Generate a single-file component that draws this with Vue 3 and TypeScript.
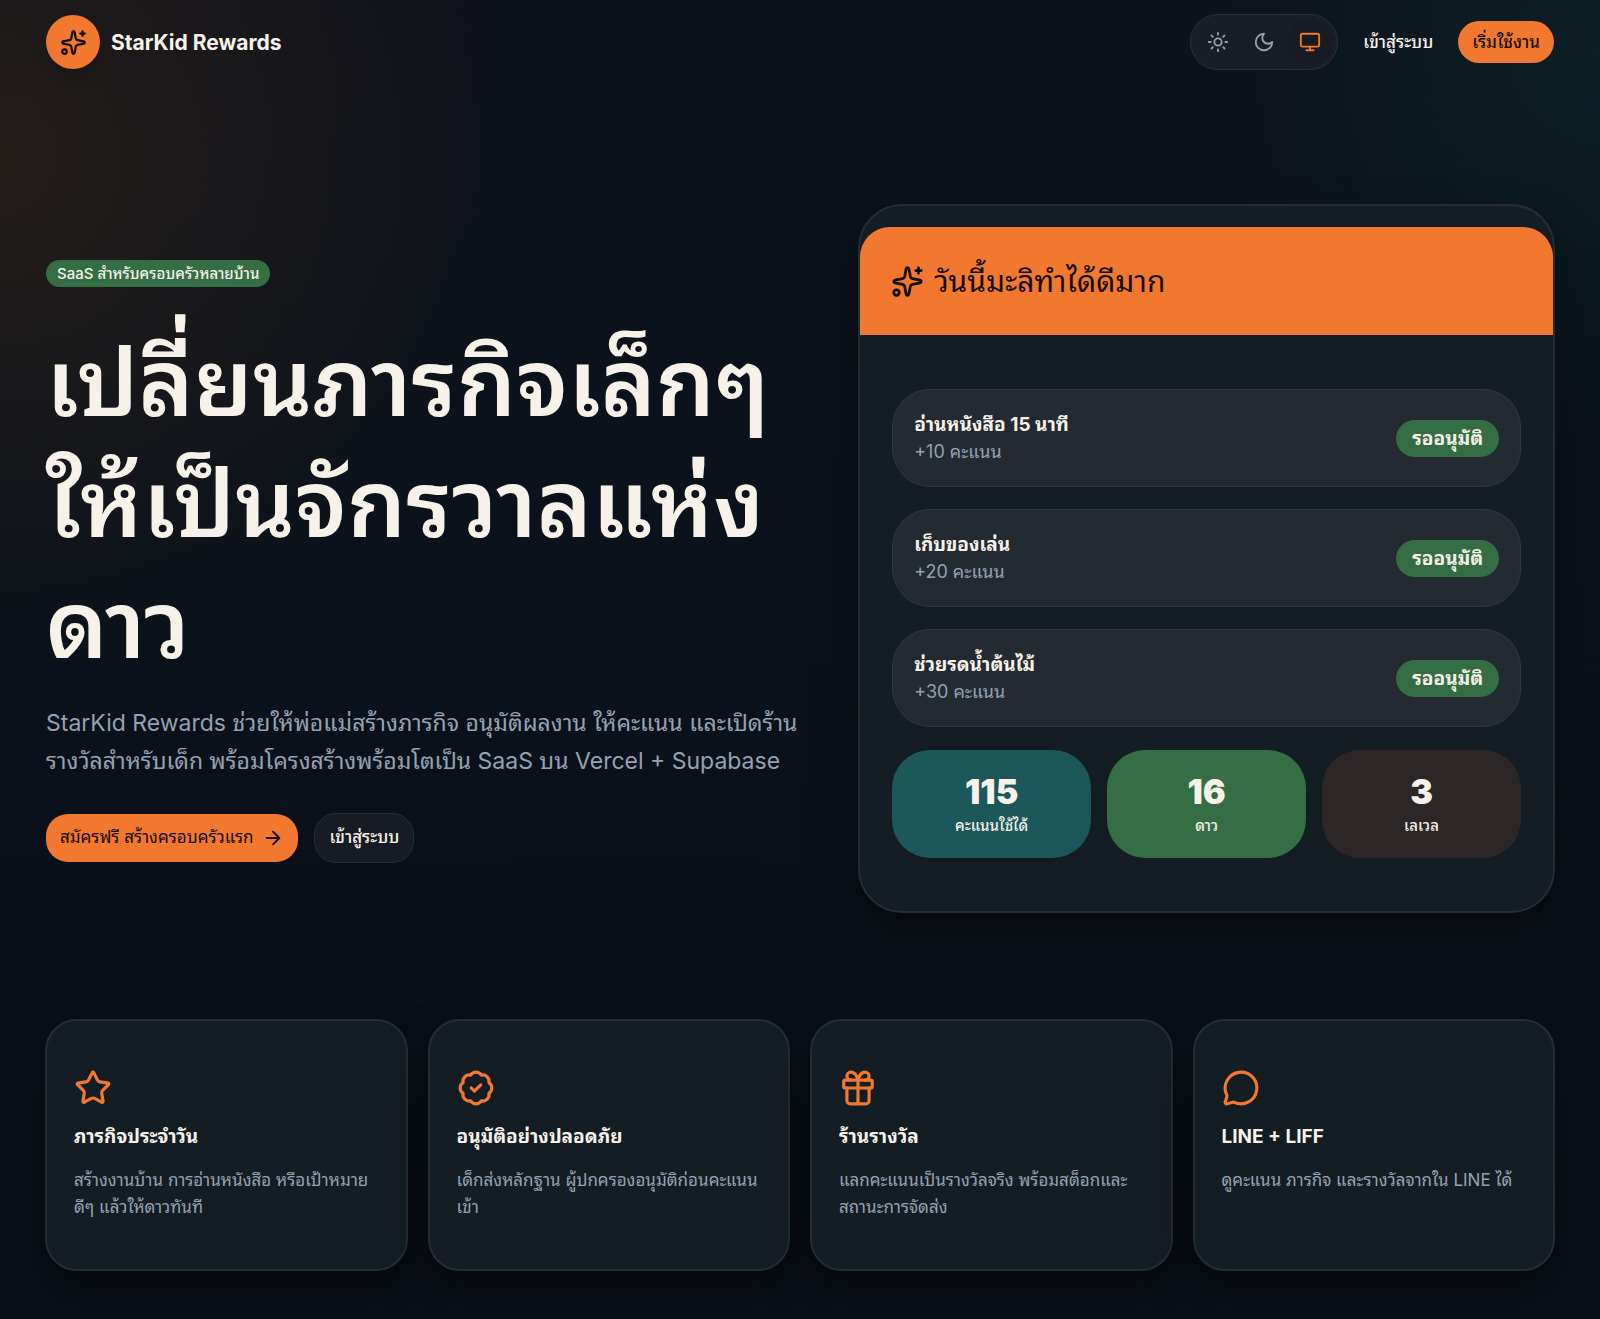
<script setup lang="ts">
import { ref } from 'vue'

type ThemeMode = 'light' | 'dark' | 'system'

interface Task {
  title: string
  points: string
}

interface Stat {
  value: number
  label: string
  tone: string
}

interface Feature {
  icon: 'star' | 'badge' | 'gift' | 'chat'
  title: string
  text: string
}

const theme = ref<ThemeMode>('system')

const tasks: Task[] = [
  { title: 'อ่านหนังสือ 15 นาที', points: '+10 คะแนน' },
  { title: 'เก็บของเล่น', points: '+20 คะแนน' },
  { title: 'ช่วยรดน้ำต้นไม้', points: '+30 คะแนน' },
]

const stats: Stat[] = [
  { value: 115, label: 'คะแนนใช้ได้', tone: 'teal' },
  { value: 16, label: 'ดาว', tone: 'green' },
  { value: 3, label: 'เลเวล', tone: 'brown' },
]

const features: Feature[] = [
  { icon: 'star', title: 'ภารกิจประจำวัน', text: 'สร้างงานบ้าน การอ่านหนังสือ หรือเป้าหมายดีๆ แล้วให้ดาวทันที' },
  { icon: 'badge', title: 'อนุมัติอย่างปลอดภัย', text: 'เด็กส่งหลักฐาน ผู้ปกครองอนุมัติก่อนคะแนนเข้า' },
  { icon: 'gift', title: 'ร้านรางวัล', text: 'แลกคะแนนเป็นรางวัลจริง พร้อมสต็อกและสถานะการจัดส่ง' },
  { icon: 'chat', title: 'LINE + LIFF', text: 'ดูคะแนน ภารกิจ และรางวัลจากใน LINE ได้' },
]
</script>

<template>
  <div class="page">
    <header class="topbar">
      <a class="brand" href="#">
        <span class="brand-mark">
          <svg class="icon" viewBox="0 0 24 24" aria-hidden="true">
            <path d="M11.017 2.814a1 1 0 0 1 1.966 0l1.051 5.558a2 2 0 0 0 1.594 1.594l5.558 1.051a1 1 0 0 1 0 1.966l-5.558 1.051a2 2 0 0 0-1.594 1.594l-1.051 5.558a1 1 0 0 1-1.966 0l-1.051-5.558a2 2 0 0 0-1.594-1.594l-5.558-1.051a1 1 0 0 1 0-1.966l5.558-1.051a2 2 0 0 0 1.594-1.594z" />
            <path d="M20 2v4M22 4h-4" />
            <circle cx="4" cy="20" r="2" />
          </svg>
        </span>
        <span class="brand-name">StarKid Rewards</span>
      </a>
      <nav class="actions">
        <div class="theme-switch" role="group" aria-label="Theme">
          <button type="button" aria-label="Light" :class="{ active: theme === 'light' }" @click="theme = 'light'">
            <svg class="icon" viewBox="0 0 24 24" aria-hidden="true">
              <circle cx="12" cy="12" r="4" />
              <path d="M12 2v2M12 20v2M4.93 4.93l1.41 1.41M17.66 17.66l1.41 1.41M2 12h2M20 12h2M6.34 17.66l-1.41 1.41M19.07 4.93l-1.41 1.41" />
            </svg>
          </button>
          <button type="button" aria-label="Dark" :class="{ active: theme === 'dark' }" @click="theme = 'dark'">
            <svg class="icon" viewBox="0 0 24 24" aria-hidden="true">
              <path d="M12 3a6 6 0 0 0 9 9 9 9 0 1 1-9-9Z" />
            </svg>
          </button>
          <button type="button" aria-label="System" :class="{ active: theme === 'system' }" @click="theme = 'system'">
            <svg class="icon" viewBox="0 0 24 24" aria-hidden="true">
              <rect x="2" y="3" width="20" height="14" rx="2" />
              <path d="M8 21h8M12 17v4" />
            </svg>
          </button>
        </div>
        <a class="login" href="#">เข้าสู่ระบบ</a>
        <a class="start" href="#">เริ่มใช้งาน</a>
      </nav>
    </header>

    <main>
      <section class="hero">
        <div class="intro">
          <span class="tag">SaaS สำหรับครอบครัวหลายบ้าน</span>
          <h1>เปลี่ยนภารกิจเล็กๆ ให้เป็นจักรวาลแห่งดาว</h1>
          <p>StarKid Rewards ช่วยให้พ่อแม่สร้างภารกิจ อนุมัติผลงาน ให้คะแนน และเปิดร้านรางวัลสำหรับเด็ก พร้อมโครงสร้างพร้อมโตเป็น SaaS บน Vercel + Supabase</p>
          <div class="cta">
            <a class="primary" href="#">
              สมัครฟรี สร้างครอบครัวแรก
              <svg class="icon" viewBox="0 0 24 24" aria-hidden="true"><path d="M5 12h14M12 5l7 7-7 7" /></svg>
            </a>
            <a class="secondary" href="#">เข้าสู่ระบบ</a>
          </div>
        </div>

        <article class="card preview">
          <h2>
            <svg class="icon" viewBox="0 0 24 24" aria-hidden="true">
              <path d="M11.017 2.814a1 1 0 0 1 1.966 0l1.051 5.558a2 2 0 0 0 1.594 1.594l5.558 1.051a1 1 0 0 1 0 1.966l-5.558 1.051a2 2 0 0 0-1.594 1.594l-1.051 5.558a1 1 0 0 1-1.966 0l-1.051-5.558a2 2 0 0 0-1.594-1.594l-5.558-1.051a1 1 0 0 1 0-1.966l5.558-1.051a2 2 0 0 0 1.594-1.594z" />
              <path d="M20 2v4M22 4h-4" />
              <circle cx="4" cy="20" r="2" />
            </svg>
            วันนี้มะลิทำได้ดีมาก
          </h2>
          <div class="preview-body">
            <div v-for="task in tasks" :key="task.title" class="task">
              <div>
                <div class="task-title">{{ task.title }}</div>
                <div class="task-points">{{ task.points }}</div>
              </div>
              <span class="status">รออนุมัติ</span>
            </div>
            <div class="stats">
              <div v-for="stat in stats" :key="stat.label" class="stat" :class="stat.tone">
                <div class="stat-value">{{ stat.value }}</div>
                <div class="stat-label">{{ stat.label }}</div>
              </div>
            </div>
          </div>
        </article>
      </section>

      <section class="features">
        <article v-for="feature in features" :key="feature.title" class="card feature">
          <svg class="icon" viewBox="0 0 24 24" aria-hidden="true">
            <path v-if="feature.icon === 'star'" d="M11.525 2.295a.53.53 0 0 1 .95 0l2.31 4.679a2.123 2.123 0 0 0 1.595 1.16l5.166.756a.53.53 0 0 1 .294.904l-3.736 3.638a2.123 2.123 0 0 0-.611 1.878l.882 5.14a.53.53 0 0 1-.771.56l-4.618-2.428a2.122 2.122 0 0 0-1.973 0L6.396 21.01a.53.53 0 0 1-.77-.56l.881-5.139a2.122 2.122 0 0 0-.611-1.879L2.16 9.795a.53.53 0 0 1 .294-.906l5.165-.755a2.122 2.122 0 0 0 1.597-1.16z" />
            <template v-else-if="feature.icon === 'badge'">
              <path d="M3.85 8.62a4 4 0 0 1 4.78-4.77 4 4 0 0 1 6.74 0 4 4 0 0 1 4.78 4.78 4 4 0 0 1 0 6.74 4 4 0 0 1-4.77 4.78 4 4 0 0 1-6.75 0 4 4 0 0 1-4.78-4.77 4 4 0 0 1 0-6.76Z" />
              <path d="m9 12 2 2 4-4" />
            </template>
            <template v-else-if="feature.icon === 'gift'">
              <rect x="3" y="7" width="18" height="5" rx="1" />
              <path d="M12 7v15M5 12v8a2 2 0 0 0 2 2h10a2 2 0 0 0 2-2v-8" />
              <path d="M7.5 7a2.5 2.5 0 0 1 0-5C9.4 2 11.2 3.9 12 7c.8-3.1 2.6-5 4.5-5a2.5 2.5 0 0 1 0 5" />
            </template>
            <path v-else d="M2.992 16.342a2 2 0 0 1 .094 1.167l-1.065 3.29a1 1 0 0 0 1.236 1.168l3.413-.998a2 2 0 0 1 1.099.092 10 10 0 1 0-4.777-4.719" />
          </svg>
          <h3>{{ feature.title }}</h3>
          <p>{{ feature.text }}</p>
        </article>
      </section>
    </main>
  </div>
</template>

<style>
body {
  margin: 0;
  background: #05070b;
}
</style>

<style scoped>
.page {
  box-sizing: border-box;
  padding: 14px 45px 48px;
  color: #f6f2e9;
  font-family: Inter, "Noto Sans Thai Looped", "Noto Sans Thai", sans-serif;
  font-size: 18px;
  line-height: 27px;
  background:
    radial-gradient(circle at 0% 12%, rgba(200, 110, 20, 0.12), transparent 520px),
    radial-gradient(circle at 100% 4%, rgba(0, 110, 100, 0.14), transparent 400px),
    linear-gradient(180deg, #0e121b 0%, #0b121b 40%, #090e17 100%);
}

a {
  color: inherit;
  text-decoration: none;
}

h1, h2, h3, p {
  margin: 0;
}

.icon {
  display: block;
  flex: none;
  width: 22px;
  height: 22px;
  fill: none;
  stroke: currentColor;
  stroke-width: 2;
  stroke-linecap: round;
  stroke-linejoin: round;
}

.topbar,
.brand,
.actions,
.theme-switch,
.cta,
.primary,
.secondary,
.start,
.login {
  display: flex;
  align-items: center;
}

.topbar {
  justify-content: space-between;
  padding: 0 1px;
}

.brand {
  gap: 11px;
  font-size: 21px;
  font-weight: 700;
}

.brand-mark {
  display: grid;
  place-items: center;
  width: 54px;
  height: 54px;
  border-radius: 50%;
  color: #150d08;
  background: #f27830;
  box-shadow: 0 8px 16px rgba(0, 0, 0, 0.15);
}

.brand-mark .icon {
  width: 27px;
  height: 27px;
}

.actions {
  gap: 11px;
}

.theme-switch {
  padding: 4px;
  border: 1px solid #2b3038;
  border-radius: 28px;
  background: #191d26;
}

.theme-switch button {
  display: grid;
  place-items: center;
  width: 46px;
  height: 46px;
  padding: 0;
  border: 0;
  border-radius: 50%;
  color: #94a1b2;
  background: transparent;
}

.theme-switch .active {
  color: #f27830;
  background: #171b24;
}

.login,
.start {
  height: 42px;
  padding: 0 14px;
  border-radius: 21px;
  font-size: 17px;
  font-weight: 500;
}

.start,
.primary {
  color: #150d08;
  background: #f27830;
}

.hero {
  display: grid;
  grid-template-columns: 1.05fr 0.95fr;
  align-items: center;
  gap: 43px;
  margin-top: 134px;
}

.intro {
  padding: 4px 1px 0;
}

.tag {
  display: inline-block;
  padding: 0 11px;
  border-radius: 14px;
  font-size: 15px;
  font-weight: 500;
  background: #346e42;
}

h1 {
  margin-top: 35px;
  font-size: 93px;
  font-weight: 600;
  line-height: 121px;
}

.intro p {
  margin-top: 19px;
  color: #94a1b2;
  font-size: 23px;
  line-height: 38px;
}

.cta {
  gap: 16px;
  margin-top: 33px;
}

.primary,
.secondary {
  gap: 9px;
  height: 48px;
  padding: 0 14px;
  border-radius: 22px;
  font-size: 17px;
}

.secondary {
  border: 1px solid #272c34;
  font-weight: 500;
  background: #171c24;
}

.card {
  border: 2px solid #252c33;
  background: #151d24;
  box-shadow: 0 24px 48px rgba(0, 0, 0, 0.4);
}

.preview {
  padding: 21px 0 53px;
  border-radius: 44px;
}

.preview h2 {
  display: flex;
  align-items: center;
  gap: 10px;
  height: 108px;
  padding: 0 31px;
  border-radius: 30px 30px 0 0;
  color: #150d08;
  font-size: 30px;
  font-weight: 400;
  line-height: 40px;
  background: #f27830;
}

.preview h2 .icon {
  width: 33px;
  height: 33px;
}

.preview-body {
  display: grid;
  gap: 22px;
  padding: 54px 32px 0;
}

.task {
  display: flex;
  align-items: center;
  justify-content: space-between;
  padding: 21px;
  border: 1px solid #31373f;
  border-radius: 38px;
  background: #242a32;
}

.task-title {
  font-size: 19px;
  font-weight: 700;
}

.task-points {
  color: #94a1b2;
}

.status {
  padding: 5px 16px;
  border-radius: 19px;
  font-size: 19px;
  font-weight: 700;
  background: #346e42;
}

.stats {
  display: grid;
  grid-template-columns: repeat(3, 1fr);
  gap: 16px;
  margin-top: 1px;
  text-align: center;
}

.stat {
  padding: 22px 16px 18px;
  border-radius: 38px;
}

.stat-value {
  font-size: 34px;
  font-weight: 900;
  line-height: 40px;
}

.stat-label {
  font-size: 15px;
  font-weight: 500;
  line-height: 28px;
}

.teal {
  background: #1c575b;
}

.green {
  background: #346e42;
}

.brown {
  background: #2c2626;
}

.features {
  display: grid;
  grid-template-columns: repeat(4, 1fr);
  gap: 20px;
  margin-top: 106px;
}

.feature {
  padding: 48px 27px;
  border-radius: 32px;
}

.feature .icon {
  width: 38px;
  height: 38px;
  color: #f27830;
}

.feature h3 {
  margin-top: 16px;
  font-size: 19px;
  font-weight: 700;
  line-height: 28px;
}

.feature p {
  margin-top: 16px;
  color: #94a1b2;
  font-size: 17px;
}
</style>
